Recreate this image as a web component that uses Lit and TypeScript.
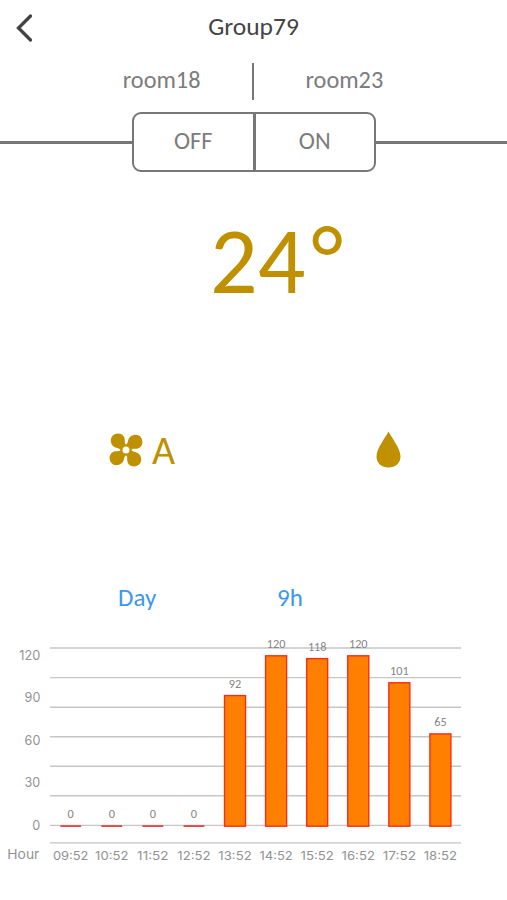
import { LitElement, html, svg, css } from "lit";
import { customElement } from "lit/decorators.js";

@customElement("usage-chart")
class UsageChart extends LitElement {
  static styles = css`
    :host { display: block; }
    svg { display: block; }
    .grid { stroke: #c6c6c6; stroke-width: 1.4; }
    .axis { font: 13.2px Inter, "Liberation Sans", sans-serif; fill: #929292; text-anchor: end; }
    .hour { font: 12px Inter, "Liberation Sans", sans-serif; fill: #929292; text-anchor: middle; }
    .value { font: 12.3px Carlito, Lato, "Open Sans", sans-serif; fill: #858585; text-anchor: middle; }
    .bar { fill: #ff8000; stroke: #fa2c18; stroke-width: 1.4; }
    .zero { stroke: #e03a3a; stroke-width: 1.7; }
  `;
  private data = [0, 0, 0, 0, 92, 120, 118, 120, 101, 65];
  render() {
    const lines = [18, 47.6, 77.2, 106.8, 136.3, 165.8, 195.4, 212.9];
    return html`<svg width="507" height="270" viewBox="0 0 507 270">
      ${lines.map((y) => svg`<line class="grid" x1="50" x2="461" y1=${y} y2=${y} />`)}
      ${[120, 90, 60, 30, 0].map((v) => svg`<text class="axis" x="40.3" y=${200 - v * 1.42} textLength=${[8, 15.7, 21][String(v).length - 1]} lengthAdjust="spacingAndGlyphs">${v}</text>`)}
      <text class="axis" x="39.3" y="228.6" textLength="32" lengthAdjust="spacingAndGlyphs">Hour</text>
      ${this.data.map((v, i) => {
        const x = 70.7 + i * 41.08;
        const h = v * 1.42;
        return svg`${v
          ? svg`<rect class="bar" x=${x - 10.5} y=${196.2 - h} width="21" height=${h} />`
          : svg`<line class="zero" x1=${x - 10.4} x2=${x + 10.4} y1="196.1" y2="196.1" />`}
          <text class="value" x=${x} y=${188.2 - h} textLength=${String(v).length * 6.2} lengthAdjust="spacingAndGlyphs">${v}</text>
          <text class="hour" x=${x} y="230" textLength=${i === 2 ? 31.5 : i === 0 ? 35.5 : 33.3} lengthAdjust="spacingAndGlyphs">${String(9 + i).padStart(2, "0")}:52</text>`;
      })}
    </svg>`;
  }
}

@customElement("app-root")
class AppRoot extends LitElement {
  static styles = css`
    :host {
      display: flex; flex-direction: column; width: 507px; height: 900px;
      background: #fff; color: #7c7c7c; overflow: hidden;
      font-family: Carlito, Lato, "Open Sans", sans-serif; font-size: 24.3px;
    }
    header { height: 54px; display: grid; grid-template-columns: 60px 1fr 60px; align-items: center; color: #444; }
    header svg { display: block; margin: 2px 0 0 14px; }
    .title { text-align: center; font-size: 25.5px; margin-top: -1px; }
    .rooms { height: 50px; margin-top: 8px; display: grid; grid-template-columns: 251.5px 2px 1fr; }
    .rooms i { background: #777; height: 37px; margin-top: 1px; }
    .rooms span { line-height: 36px; }
    .left { text-align: right; padding-right: 51px; }
    .right { padding-left: 52px; }
    .switch { display: flex; align-items: center; height: 60px; }
    .rule { height: 3px; background: #777; }
    .start { width: 132px; }
    .end { flex: 1; }
    .box { box-sizing: border-box; display: flex; width: 244px; height: 60px; border: 2px solid #777; border-radius: 9px; }
    .box span { flex: 1; display: flex; align-items: center; justify-content: center; padding-bottom: 3px; }
    .box i { width: 3px; background: #777; }
    .temp { height: 248px; display: flex; color: #bf9000; font-size: 94px; line-height: 178px; padding-left: 210px; }
    .degree { margin-left: 6px; margin-top: -2px; }
    .modes { height: 60px; display: flex; align-items: center; color: #bf9000; }
    .fan { margin-left: 109px; }
    .auto { font-size: 40px; margin-left: 9px; width: 25px; }
    .drop { margin-left: 199px; }
    .range { height: 40px; margin-top: 97px; display: flex; align-items: center; color: #3c97ee; font-size: 25px; }
    .day { width: 159px; margin-left: 118px; }
    usage-chart { margin-top: 13px; }
  `;
  render() {
    const blade = "M17 17L12 18.500C12 16.500 10.500 15.500 8 15C4 14.200 1.800 11 1.800 7.500C1.800 3.500 5 .6 9 .6C13.500 .6 16 4 15.800 7.500C15.700 10 15.800 11.500 18.500 12.500Z";
    return html`
      <header>
        <svg width="24" height="32" viewBox="0 0 24 32"><path d="M16.500 4 4.500 16l12 12" fill="none" stroke="#444" stroke-width="3.300" stroke-linecap="round"/></svg>
        <div class="title">Group79</div>
      </header>
      <div class="rooms"><span class="left">room18</span><i></i><span class="right">room23</span></div>
      <div class="switch">
        <div class="rule start"></div>
        <div class="box"><span>OFF</span><i></i><span>ON</span></div>
        <div class="rule end"></div>
      </div>
      <div class="temp"><span>24</span><span class="degree">°</span></div>
      <div class="modes">
        <svg class="fan" width="34" height="34" viewBox="0 0 34 34">
          ${[0, 90, 180, 270].map((a) => svg`<path fill="#bf9000" transform="rotate(${a} 17 17)" d=${blade} />`)}
          <circle cx="17" cy="17" r="3.5" fill="#fff"/>
        </svg>
        <span class="auto">A</span>
        <svg class="drop" width="26" height="38" viewBox="0 0 26 38"><path fill="#bf9000" d="M12.500 .5C15 6 24.500 17 24.500 25.500C24.500 32 19.500 36.500 12.500 36.500S.5 32 .5 25.500C.5 17 10 6 12.500 .5Z"/></svg>
      </div>
      <div class="range"><span class="day">Day</span><span>9h</span></div>
      <usage-chart></usage-chart>`;
  }
}
